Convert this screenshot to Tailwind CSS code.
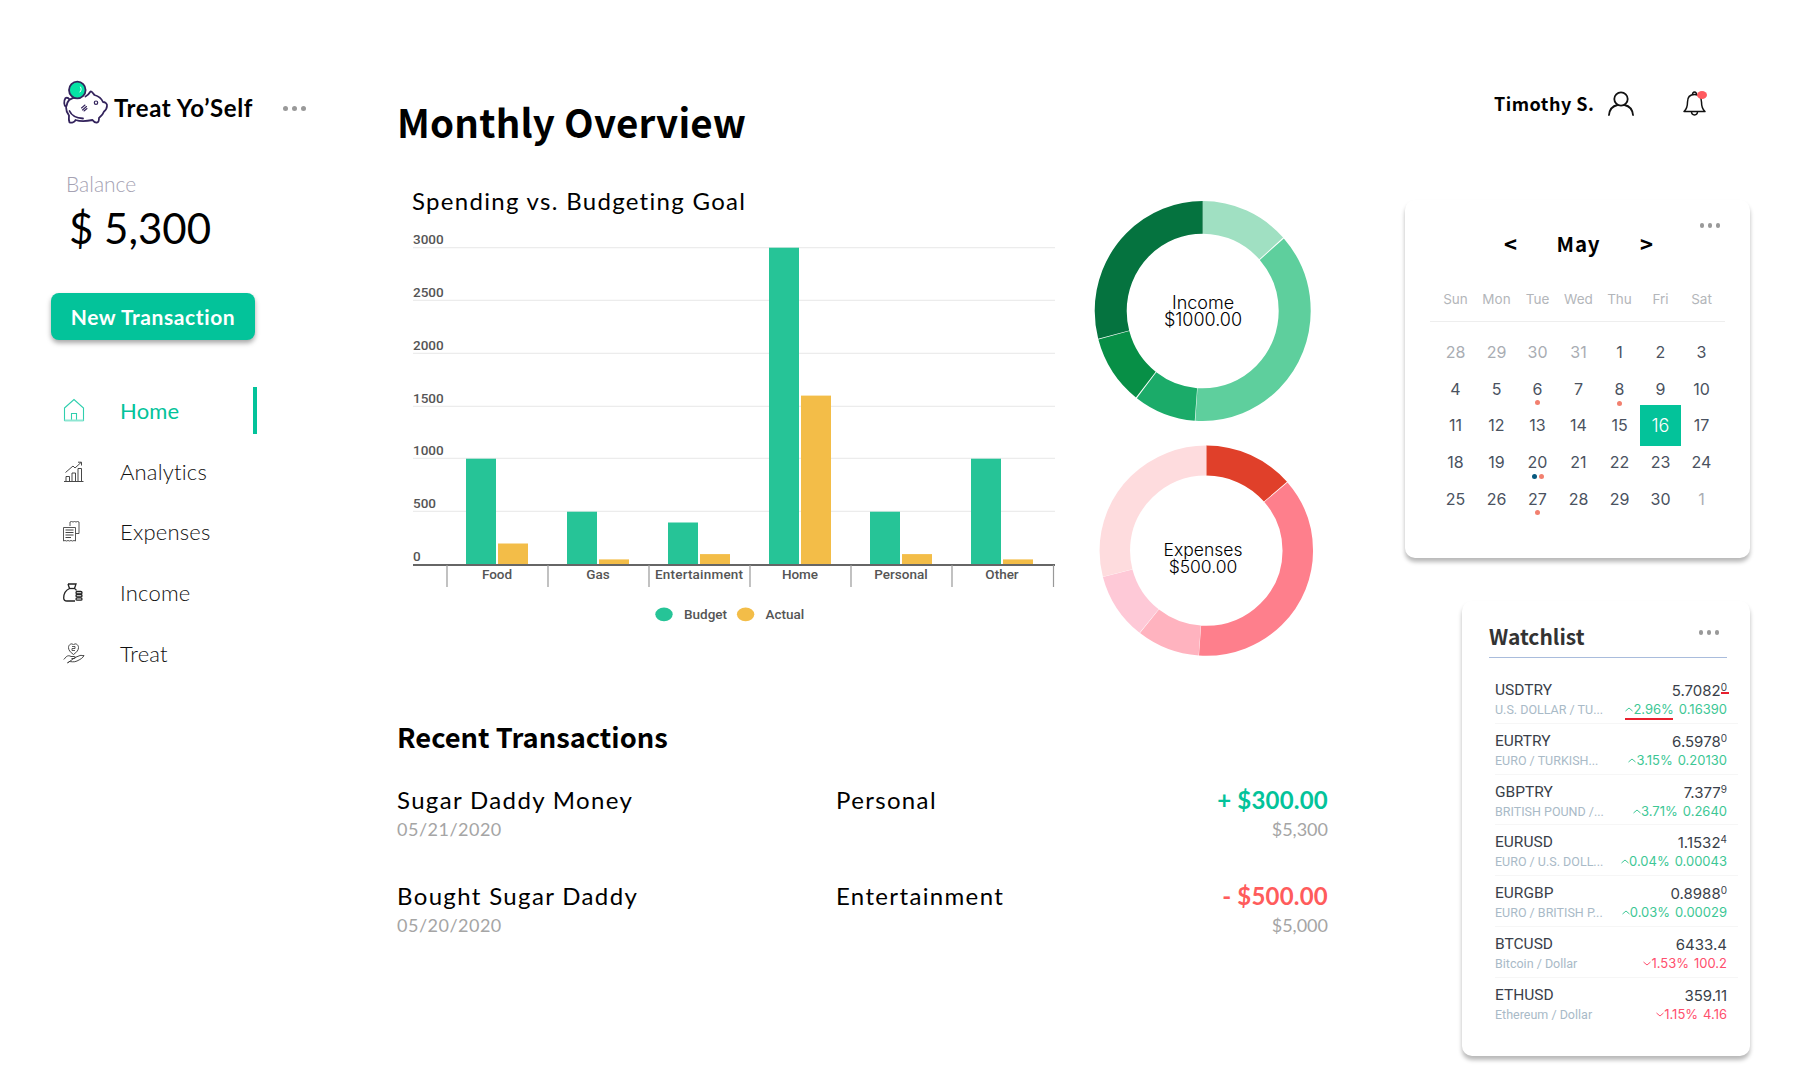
<!DOCTYPE html>
<html lang="en">
<head>
  <meta charset="UTF-8">
  <meta name="viewport" content="width=device-width, initial-scale=1">
  <title>Treat Yo'Self</title>
  <script src="https://cdn.jsdelivr.net/npm/@tailwindcss/browser@4"></script>
</head>
<body class="bg-white text-black font-['Lato',sans-serif]">
<div class="flex w-[1796px] h-[1076px] overflow-hidden">

  <!-- Sidebar -->
  <aside class="w-[346px] shrink-0 ml-[51px] pt-[82px]">
    <div class="flex items-center h-[52px] pl-[9px]">
      <svg class="self-start -mt-[4px]" width="50" height="50" viewBox="60 78 50 50" fill="none" stroke="#33235c" stroke-width="1.800" stroke-linecap="round" stroke-linejoin="round">
        <path d="M70 99.5C72 98 74 97.5 76 97.5M85.500 96.500C87 95.800 89 94 90.500 91.500C91.800 91 92.500 93 94.500 95C98 96 101.500 98.500 103 102C105 102 107.500 103.500 107 106C106.800 108.500 105.500 110.500 104 111.500C103 114.500 101 116.500 99 118C99 120 98.500 122.500 97 122.500C95 122.800 93.500 121.500 92.500 120C88 121 80 121.500 75.500 120C74.800 122 72 123.200 69.500 122.500C68.500 120 68.800 117.500 69 115.500C67 113 66 110 66 107C64 106 63.500 101 65.500 98C67 97.500 68.500 98 69.500 99.500C68 101 67 103.500 66.500 106"/>
        <path d="M69.500 111C71.500 115.500 76 118 83 118.500"/>
        <circle cx="77.300" cy="90" r="8.300" fill="#05e3a5"/>
        <path d="M80.500 87c1 1.500 1 3.500-.5 5" stroke="#fff" stroke-width="1"/>
        <path d="M81.500 108l3.500-3M82.500 110l4-3.500M84 111l3-2.500" stroke-width="1.100"/>
        <circle cx="96" cy="102.700" r="1.700" stroke-width="1.200"/>
      </svg>
      <span class="ml-[4px] text-[24px] font-bold tracking-[0.6px]">Treat Yo’Self</span>
      <div class="flex gap-[4px] ml-[30px]">
        <i class="w-[5px] h-[5px] rounded-full bg-[#999999]"></i><i class="w-[5px] h-[5px] rounded-full bg-[#999999]"></i><i class="w-[5px] h-[5px] rounded-full bg-[#999999]"></i>
      </div>
    </div>

    <div class="mt-[37px] ml-[15px] h-[26px] leading-[26px] text-[21px] font-light text-[#a5a2b3]">Balance</div>
    <div class="mt-[7px] ml-[18px] h-[48px] leading-[48px] text-[42px] font-normal">$ 5,300</div>

    <button class="mt-[41px] w-[204px] h-[47px] rounded-[8px] bg-[#03c39a] text-white text-[21px] font-bold tracking-[0.6px] shadow-[0_3px_5px_rgba(0,0,0,0.35)]">New Transaction</button>

    <nav class="mt-[40px] w-[206px] text-[22px] font-light text-[#111] tracking-[0.2px]">
      <a class="flex items-center justify-between h-[60.700px] text-[#03c39a] font-normal">
        <span class="flex items-center pl-[12px]">
          <span class="w-[57px]">
            <svg class="block" width="23" height="24" viewBox="0 0 23 24" fill="none" stroke="#2fcfae" stroke-width="1.100">
              <path d="M1.500 10L11 1.500 20.500 10V22.500H1.500Z"/><path d="M8.500 22.500V15.500H13.500V22.500"/><path d="M1.500 22.500H20.500" stroke-width="2" stroke="#8ee6d2"/>
            </svg>
          </span>
          Home
        </span>
        <i class="w-[4px] h-[47px] bg-[#03c39a]"></i>
      </a>
      <a class="flex items-center h-[60.700px] pl-[12px]">
        <span class="w-[57px]">
          <svg class="block ml-[1px]" width="20" height="21" viewBox="0 0 20 21" fill="none" stroke="#333" stroke-width="0.900">
            <path d="M0 20.500H19.500"/><path d="M2 20V15.500H5.500V20M8 20V12H11.500V20M14 20V7.500H17.500V20"/><path d="M1.500 11.500L9 5 11 7 17 1.500M14 1.200H17.500V4.500"/>
          </svg>
        </span>
        Analytics
      </a>
      <a class="flex items-center h-[60.700px] pl-[12px]">
        <span class="w-[57px]">
          <svg class="block" width="17" height="21" viewBox="0 0 17 21" fill="none" stroke="#444" stroke-width="0.900">
            <path d="M7 5V1L8.500 .5 10 1 11.500 .5 13 1 14.500 .5 16 1V12.500H12.500"/>
            <path d="M.5 6.500H12.500V20L11 19.500 9.500 20 8 19.500 6.500 20 5 19.500 3.500 20 2 19.500 .5 20Z" fill="#fff"/>
            <path d="M2.500 9H10.500M2.500 11.500H10.500M2.500 14H10.500M2.500 16.500H8" stroke-width="1.100"/>
          </svg>
        </span>
        Expenses
      </a>
      <a class="flex items-center h-[60.700px] pl-[12px]">
        <span class="w-[57px]">
          <svg class="block" width="20" height="19" viewBox="0 0 20 19" fill="none" stroke="#222" stroke-width="1.300">
            <path d="M5 1H13L11.500 5.500C12.500 6 13 6.500 13.500 7.500M5 1L6.500 5.500C3 7 .7 11 .7 15 .7 17 2 18 4 18H12"/><path d="M6.500 5.500H11.500"/>
            <rect x="13" y="8.500" width="6" height="2.400" rx="1.200"/><rect x="13" y="11.500" width="6" height="2.400" rx="1.200"/><rect x="13" y="14.800" width="6" height="2.400" rx="1.200"/>
          </svg>
        </span>
        Income
      </a>
      <a class="flex items-center h-[60.700px] pl-[12px]">
        <span class="w-[57px]">
          <svg class="block" width="22" height="22" viewBox="0 0 22 22" fill="none" stroke="#333" stroke-width="0.900">
            <path d="M10.500 12.500C7 10 5.500 8 5.500 5.500 5.500 2.500 9 .5 10.500 3 12 .5 15.500 2.500 15.500 5.500 15.500 8 14 10 10.500 12.500Z"/>
            <path d="M9 4.500h3v2h-3v2h3" stroke-width="0.800"/>
            <path d="M.8 17.500L3.500 14.500C5 13.500 6.500 13.500 8 14.500H11.500C12.500 14.500 12.500 16.500 11.500 16.500H8.500M12 15.500L17 13.500C18.500 13 19.500 14 21 13.500 20 16 17 17.500 14 19 11 20.500 8 19.500 6 19.500L4.500 21Z"/>
          </svg>
        </span>
        Treat
      </a>
    </nav>
  </aside>

  <!-- Main column -->
  <main class="w-[931px] shrink-0 pt-[93px]">
    <h1 class="h-[56px] leading-[56px] text-[38.500px] font-bold font-['Noto_Sans_CJK_SC',sans-serif] tracking-[0.2px]">Monthly Overview</h1>

    <div class="flex mt-[36px]">
      <div class="w-[673px]">
        <h2 class="h-[33px] leading-[32px] pl-[15px] text-[24px] tracking-[1.300px]">Spending vs. Budgeting Goal</h2>
        <!-- bars: y = 564.7 - value * 0.10567 -->
        <svg class="block font-['Roboto',sans-serif] font-medium" width="673" height="412" viewBox="397 218 673 412">
          <g stroke="#ececec" stroke-width="1.200">
            <path d="M413 247.700H1055M413 300.300H1055M413 353.300H1055M413 406.300H1055M413 458.300H1055M413 511.300H1055"/>
          </g>
          <g class="fill-[#555] text-[13.500px]">
            <text x="413" y="244">3000</text><text x="413" y="296.500">2500</text><text x="413" y="350">2000</text><text x="413" y="403">1500</text><text x="413" y="455">1000</text><text x="413" y="507.500">500</text><text x="413" y="560.500">0</text>
          </g>
          <g fill="#26c497">
            <rect x="466" y="458.700" width="30" height="106"/>
            <rect x="567" y="511.700" width="30" height="53"/>
            <rect x="668" y="522.500" width="30" height="42.200"/>
            <rect x="769" y="247.700" width="30" height="317"/>
            <rect x="870" y="511.700" width="30" height="53"/>
            <rect x="971" y="458.700" width="30" height="106"/>
          </g>
          <g fill="#f3bd48">
            <rect x="498" y="543.500" width="30" height="21.200"/>
            <rect x="599" y="559.400" width="30" height="5.300"/>
            <rect x="700" y="554.100" width="30" height="10.600"/>
            <rect x="801" y="395.600" width="30" height="169.100"/>
            <rect x="902" y="554.100" width="30" height="10.600"/>
            <rect x="1003" y="559.400" width="30" height="5.300"/>
          </g>
          <path d="M413 565H1055" stroke="#666" stroke-width="2"/>
          <path d="M447 565V587M548 565V587M649 565V587M750 565V587M851 565V587M952 565V587M1053.500 565V587" stroke="#999" stroke-width="1.200"/>
          <g class="fill-[#555] text-[13.500px]" text-anchor="middle">
            <text x="497" y="579">Food</text><text x="598" y="579">Gas</text><text x="699" y="579" textLength="88">Entertainment</text><text x="800" y="579">Home</text><text x="901" y="579">Personal</text><text x="1002" y="579">Other</text>
          </g>
          <ellipse cx="664" cy="614.300" rx="8.700" ry="6.900" fill="#26c497"/>
          <ellipse cx="745.600" cy="614.300" rx="8.700" ry="6.900" fill="#f3bd48"/>
          <g class="fill-[#555] text-[13.500px]">
            <text x="684" y="619">Budget</text><text x="765.500" y="619">Actual</text>
          </g>
        </svg>
      </div>

      <div class="ml-[20px] pt-[11px] font-['Inter',sans-serif]">
        <svg class="block" width="230" height="230" viewBox="1090 196 230 230" fill="none" stroke-width="32">
          <g transform="translate(0 311) scale(1 1.018) translate(0 -311) rotate(-90 1202.700 311)">
            <circle cx="1202.700" cy="311" r="92" pathLength="360" stroke="#a0e0c2" stroke-dasharray="48.100 360"/>
            <circle cx="1202.700" cy="311" r="92" pathLength="360" stroke="#5ecf9d" stroke-dasharray="135.300 360" stroke-dashoffset="-48.700"/>
            <circle cx="1202.700" cy="311" r="92" pathLength="360" stroke="#1bab69" stroke-dasharray="33.300 360" stroke-dashoffset="-184.300"/>
            <circle cx="1202.700" cy="311" r="92" pathLength="360" stroke="#078f46" stroke-dasharray="36.700 360" stroke-dashoffset="-218.200"/>
            <circle cx="1202.700" cy="311" r="92" pathLength="360" stroke="#05733f" stroke-dasharray="104.700 360" stroke-dashoffset="-255.300"/>
          </g>
          <g class="fill-black text-[18px] font-light" text-anchor="middle" stroke="none">
            <text x="1203" y="309">Income</text><text x="1203" y="325.500">$1000.00</text>
          </g>
        </svg>
        <svg class="block mt-[14px]" width="230" height="220" viewBox="1090 441 230 220" fill="none" stroke-width="30.500">
          <g transform="translate(0 551.700) scale(1 .985) translate(0 -551.700) rotate(-90 1206.300 551.700)">
            <circle cx="1206.300" cy="551.700" r="91.500" pathLength="360" stroke="#e0402a" stroke-dasharray="49.100 360"/>
            <circle cx="1206.300" cy="551.700" r="91.500" pathLength="360" stroke="#fe7f8c" stroke-dasharray="134.500 360" stroke-dashoffset="-49.500"/>
            <circle cx="1206.300" cy="551.700" r="91.500" pathLength="360" stroke="#ffb3bf" stroke-dasharray="34.200 360" stroke-dashoffset="-184.200"/>
            <circle cx="1206.300" cy="551.700" r="91.500" pathLength="360" stroke="#fec9d7" stroke-dasharray="36.800 360" stroke-dashoffset="-218.700"/>
            <circle cx="1206.300" cy="551.700" r="91.500" pathLength="360" stroke="#fedcde" stroke-dasharray="104.400 360" stroke-dashoffset="-255.600"/>
          </g>
          <g class="fill-black text-[17.500px] font-light" text-anchor="middle" stroke="none">
            <text x="1203" y="557">Expenses</text><text x="1203" y="574">$500.00</text>
          </g>
        </svg>
      </div>
    </div>

    <h2 class="mt-[56px] h-[40px] leading-[40px] text-[27.300px] font-bold font-['Noto_Sans_CJK_SC',sans-serif]">Recent Transactions</h2>

    <div class="mt-[29px] flex">
      <div class="w-[439px]">
        <div class="h-[30px] leading-[30px] text-[24px] tracking-[1.350px]">Sugar Daddy Money</div>
        <div class="mt-[1px] h-[26px] leading-[26px] text-[18px] tracking-[0.5px] text-[#a5a5a5]">05/21/2020</div>
      </div>
      <div class="flex-1 h-[30px] leading-[30px] text-[24px] tracking-[1.350px]">Personal</div>
      <div class="text-right">
        <div class="h-[30px] leading-[30px] text-[24px] font-bold tracking-[0.2px] text-[#03c39a]">+ $300.00</div>
        <div class="mt-[1px] h-[26px] leading-[26px] text-[18px] text-[#a5a5a5]">$5,300</div>
      </div>
    </div>
    <div class="mt-[39px] flex">
      <div class="w-[439px]">
        <div class="h-[30px] leading-[30px] text-[24px] tracking-[1.350px]">Bought Sugar Daddy</div>
        <div class="mt-[1px] h-[26px] leading-[26px] text-[18px] tracking-[0.5px] text-[#a5a5a5]">05/20/2020</div>
      </div>
      <div class="flex-1 h-[30px] leading-[30px] text-[24px] tracking-[1.350px]">Entertainment</div>
      <div class="text-right">
        <div class="h-[30px] leading-[30px] text-[24px] font-bold tracking-[0.2px] text-[#ff5c5c]">- $500.00</div>
        <div class="mt-[1px] h-[26px] leading-[26px] text-[18px] text-[#a5a5a5]">$5,000</div>
      </div>
    </div>
  </main>

  <!-- Right column -->
  <section class="w-[345px] shrink-0 ml-[77px] pt-[83px]">
    <div class="flex items-center h-[40px] pl-[89px]">
      <span class="w-[114px] text-[18px] font-bold tracking-[0.5px] font-['Noto_Sans_CJK_SC',sans-serif]">Timothy S.</span>
      <svg width="26" height="25" viewBox="0 0 26 25" fill="none" stroke="#111" stroke-width="1.800" stroke-linecap="round">
        <circle cx="13" cy="8" r="6.700"/><path d="M1 24C1.500 18.500 5 15 9.500 14M25 24C24.500 18.500 21 15 16.500 14"/>
      </svg>
      <svg class="ml-[49px]" width="25" height="27" viewBox="0 0 25 27" fill="none" stroke="#111" stroke-width="1.500" stroke-linejoin="round">
        <path d="M1 21.500C4 19 4.500 16 4.500 12 4.500 7 7 4.500 11.500 4.500 16 4.500 18.500 7 18.500 12 18.500 16 19 19 22 21.500Z"/>
        <path d="M9.500 4.800C9.500 1 13.500 1 13.500 4.800M8.500 21.500C8.500 26 14.500 26 14.500 21.500"/>
        <ellipse cx="19" cy="5" rx="5" ry="4" fill="#ff5a5f" stroke="none"/>
      </svg>
    </div>

    <!-- Calendar -->
    <div class="mt-[77px] h-[358px] pt-[23px] pl-[30px] rounded-[10px] bg-white shadow-[0_4px_4px_rgba(0,0,0,0.28)] font-['Inter',sans-serif]">
      <div class="flex justify-end gap-[3.500px] pr-[30px]">
        <i class="w-[4.500px] h-[4.500px] rounded-full bg-[#999999]"></i><i class="w-[4.500px] h-[4.500px] rounded-full bg-[#999999]"></i><i class="w-[4.500px] h-[4.500px] rounded-full bg-[#999999]"></i>
      </div>
      <div class="w-[287px] h-[32px] flex justify-center items-center text-center font-bold font-['Noto_Sans_CJK_SC',sans-serif]">
        <span class="w-[68px] text-[22px]">&lt;</span>
        <span class="w-[68px] text-[20.500px] tracking-[0.8px]">May</span>
        <span class="w-[68px] text-[22px]">&gt;</span>
      </div>
      <div class="w-[295px] -ml-[5px] mt-[28px] h-[34px] pl-[5px] border-b border-[#eeeeee]">
        <div class="w-[287px] grid grid-cols-7 h-[22px] leading-[22px] text-center text-[13.500px] text-[#b3b6ba]">
          <span>Sun</span><span>Mon</span><span>Tue</span><span>Wed</span><span>Thu</span><span>Fri</span><span>Sat</span>
        </div>
      </div>
      <div class="w-[287px] mt-[12px] grid grid-cols-7 auto-rows-[36.700px] text-[16px] text-[#4a5260] *:flex *:items-center *:justify-center">
        <span class="text-[#a9adb3]">28</span><span class="text-[#a9adb3]">29</span><span class="text-[#a9adb3]">30</span><span class="text-[#a9adb3]">31</span><span>1</span><span>2</span><span>3</span>
        <span>4</span><span>5</span>
        <span class="relative">6<i class="absolute left-[18px] top-[30px] w-[5px] h-[5px] rounded-full bg-[#f2806f]"></i></span>
        <span>7</span>
        <span class="relative">8<i class="absolute left-[18px] top-[31px] w-[5px] h-[5px] rounded-full bg-[#f2806f]"></i></span>
        <span>9</span><span>10</span>
        <span>11</span><span>12</span><span>13</span><span>14</span><span>15</span>
        <span class="-my-[2px] bg-[#03c39a] text-white text-[18px] font-light">16</span>
        <span>17</span>
        <span>18</span><span>19</span>
        <span class="relative">20<i class="absolute left-[15px] top-[30px] w-[5px] h-[5px] rounded-full bg-[#07597f]"></i><i class="absolute left-[22px] top-[30px] w-[5px] h-[5px] rounded-full bg-[#f2806f]"></i></span>
        <span>21</span><span>22</span><span>23</span><span>24</span>
        <span>25</span><span>26</span>
        <span class="relative">27<i class="absolute left-[18px] top-[30px] w-[5px] h-[5px] rounded-full bg-[#f2806f]"></i></span>
        <span>28</span><span>29</span><span>30</span><span class="text-[#a9adb3]">1</span>
      </div>
    </div>

    <!-- Watchlist -->
    <div class="mt-[43px] ml-[57px] h-[455px] pt-[19px] pl-[27px] pr-[23px] rounded-[10px] bg-white shadow-[0_4px_4px_rgba(0,0,0,0.28)] font-['Inter',sans-serif]">
      <div class="flex justify-between h-[38px] border-b border-[#a9bcdc]">
        <span class="h-[32px] leading-[32px] text-[21px] font-bold text-[#333] font-['Noto_Sans_CJK_SC',sans-serif]">Watchlist</span>
        <div class="flex gap-[3.500px] mt-[10px] mr-[8px]">
          <i class="w-[4.500px] h-[4.500px] rounded-full bg-[#999999]"></i><i class="w-[4.500px] h-[4.500px] rounded-full bg-[#999999]"></i><i class="w-[4.500px] h-[4.500px] rounded-full bg-[#999999]"></i>
        </div>
      </div>

      <div class="mt-[15px] ml-[6px] -mr-[11px] text-[#3a3f4a]">
        <div class="relative h-[50.750px] pt-[8px] pr-[11px] border-b border-[#f6f6f6]">
          <div class="flex justify-between h-[19px] leading-[19px] text-[15px]"><span class="font-['Roboto',sans-serif] text-[15.500px]">USDTRY</span><span>5.7082<sup class="text-[10px]">0</sup></span></div>
          <div class="flex justify-between h-[19px] leading-[19px] text-[13px] text-[#a9bac7]"><span class="font-['Roboto',sans-serif] text-[12.500px]">U.S. DOLLAR / TU...</span><span class="flex items-center gap-[5px] text-[#3dc795]"><span class="flex items-center"><svg width="8" height="5" viewBox="0 0 8 5" fill="none" stroke="currentColor"><path d="M.5 4L4 1l3.500 3"/></svg>2.96%</span>0.16390</span></div>
          <i class="absolute left-[130px] top-[45px] w-[48px] h-[1.500px] bg-[#e8202e]"></i>
          <i class="absolute left-[226px] top-[19px] w-[8px] h-[1.500px] bg-[#e8202e]"></i>
        </div>
        <div class="h-[50.750px] pt-[8px] pr-[11px] border-b border-[#f6f6f6]">
          <div class="flex justify-between h-[19px] leading-[19px] text-[15px]"><span class="font-['Roboto',sans-serif] text-[15.500px]">EURTRY</span><span>6.5978<sup class="text-[10px]">0</sup></span></div>
          <div class="flex justify-between h-[19px] leading-[19px] text-[13px] text-[#a9bac7]"><span class="font-['Roboto',sans-serif] text-[12.500px]">EURO / TURKISH...</span><span class="flex items-center gap-[5px] text-[#3dc795]"><span class="flex items-center"><svg width="8" height="5" viewBox="0 0 8 5" fill="none" stroke="currentColor"><path d="M.5 4L4 1l3.500 3"/></svg>3.15%</span>0.20130</span></div>
        </div>
        <div class="h-[50.750px] pt-[8px] pr-[11px] border-b border-[#f6f6f6]">
          <div class="flex justify-between h-[19px] leading-[19px] text-[15px]"><span class="font-['Roboto',sans-serif] text-[15.500px]">GBPTRY</span><span>7.377<sup class="text-[10px]">9</sup></span></div>
          <div class="flex justify-between h-[19px] leading-[19px] text-[13px] text-[#a9bac7]"><span class="font-['Roboto',sans-serif] text-[12.500px]">BRITISH POUND /...</span><span class="flex items-center gap-[5px] text-[#3dc795]"><span class="flex items-center"><svg width="8" height="5" viewBox="0 0 8 5" fill="none" stroke="currentColor"><path d="M.5 4L4 1l3.500 3"/></svg>3.71%</span>0.2640</span></div>
        </div>
        <div class="h-[50.750px] pt-[8px] pr-[11px] border-b border-[#f6f6f6]">
          <div class="flex justify-between h-[19px] leading-[19px] text-[15px]"><span class="font-['Roboto',sans-serif] text-[15.500px]">EURUSD</span><span>1.1532<sup class="text-[10px]">4</sup></span></div>
          <div class="flex justify-between h-[19px] leading-[19px] text-[13px] text-[#a9bac7]"><span class="font-['Roboto',sans-serif] text-[12.500px]">EURO / U.S. DOLL...</span><span class="flex items-center gap-[5px] text-[#3dc795]"><span class="flex items-center"><svg width="8" height="5" viewBox="0 0 8 5" fill="none" stroke="currentColor"><path d="M.5 4L4 1l3.500 3"/></svg>0.04%</span>0.00043</span></div>
        </div>
        <div class="h-[50.750px] pt-[8px] pr-[11px] border-b border-[#f6f6f6]">
          <div class="flex justify-between h-[19px] leading-[19px] text-[15px]"><span class="font-['Roboto',sans-serif] text-[15.500px]">EURGBP</span><span>0.8988<sup class="text-[10px]">0</sup></span></div>
          <div class="flex justify-between h-[19px] leading-[19px] text-[13px] text-[#a9bac7]"><span class="font-['Roboto',sans-serif] text-[12.500px]">EURO / BRITISH P...</span><span class="flex items-center gap-[5px] text-[#3dc795]"><span class="flex items-center"><svg width="8" height="5" viewBox="0 0 8 5" fill="none" stroke="currentColor"><path d="M.5 4L4 1l3.500 3"/></svg>0.03%</span>0.00029</span></div>
        </div>
        <div class="h-[50.750px] pt-[8px] pr-[11px] border-b border-[#f6f6f6]">
          <div class="flex justify-between h-[19px] leading-[19px] text-[15px]"><span class="font-['Roboto',sans-serif] text-[15.500px]">BTCUSD</span><span>6433.4</span></div>
          <div class="flex justify-between h-[19px] leading-[19px] text-[13px] text-[#a9bac7]"><span class="font-['Roboto',sans-serif] text-[12.500px]">Bitcoin / Dollar</span><span class="flex items-center gap-[5px] text-[#ff4f6d]"><span class="flex items-center"><svg width="8" height="5" viewBox="0 0 8 5" fill="none" stroke="currentColor"><path d="M.5 1L4 4l3.500-3"/></svg>1.53%</span>100.2</span></div>
        </div>
        <div class="h-[50.750px] pt-[8px] pr-[11px]">
          <div class="flex justify-between h-[19px] leading-[19px] text-[15px]"><span class="font-['Roboto',sans-serif] text-[15.500px]">ETHUSD</span><span>359.11</span></div>
          <div class="flex justify-between h-[19px] leading-[19px] text-[13px] text-[#a9bac7]"><span class="font-['Roboto',sans-serif] text-[12.500px]">Ethereum / Dollar</span><span class="flex items-center gap-[5px] text-[#ff4f6d]"><span class="flex items-center"><svg width="8" height="5" viewBox="0 0 8 5" fill="none" stroke="currentColor"><path d="M.5 1L4 4l3.500-3"/></svg>1.15%</span>4.16</span></div>
        </div>
      </div>
    </div>
  </section>
</div>
</body>
</html>
